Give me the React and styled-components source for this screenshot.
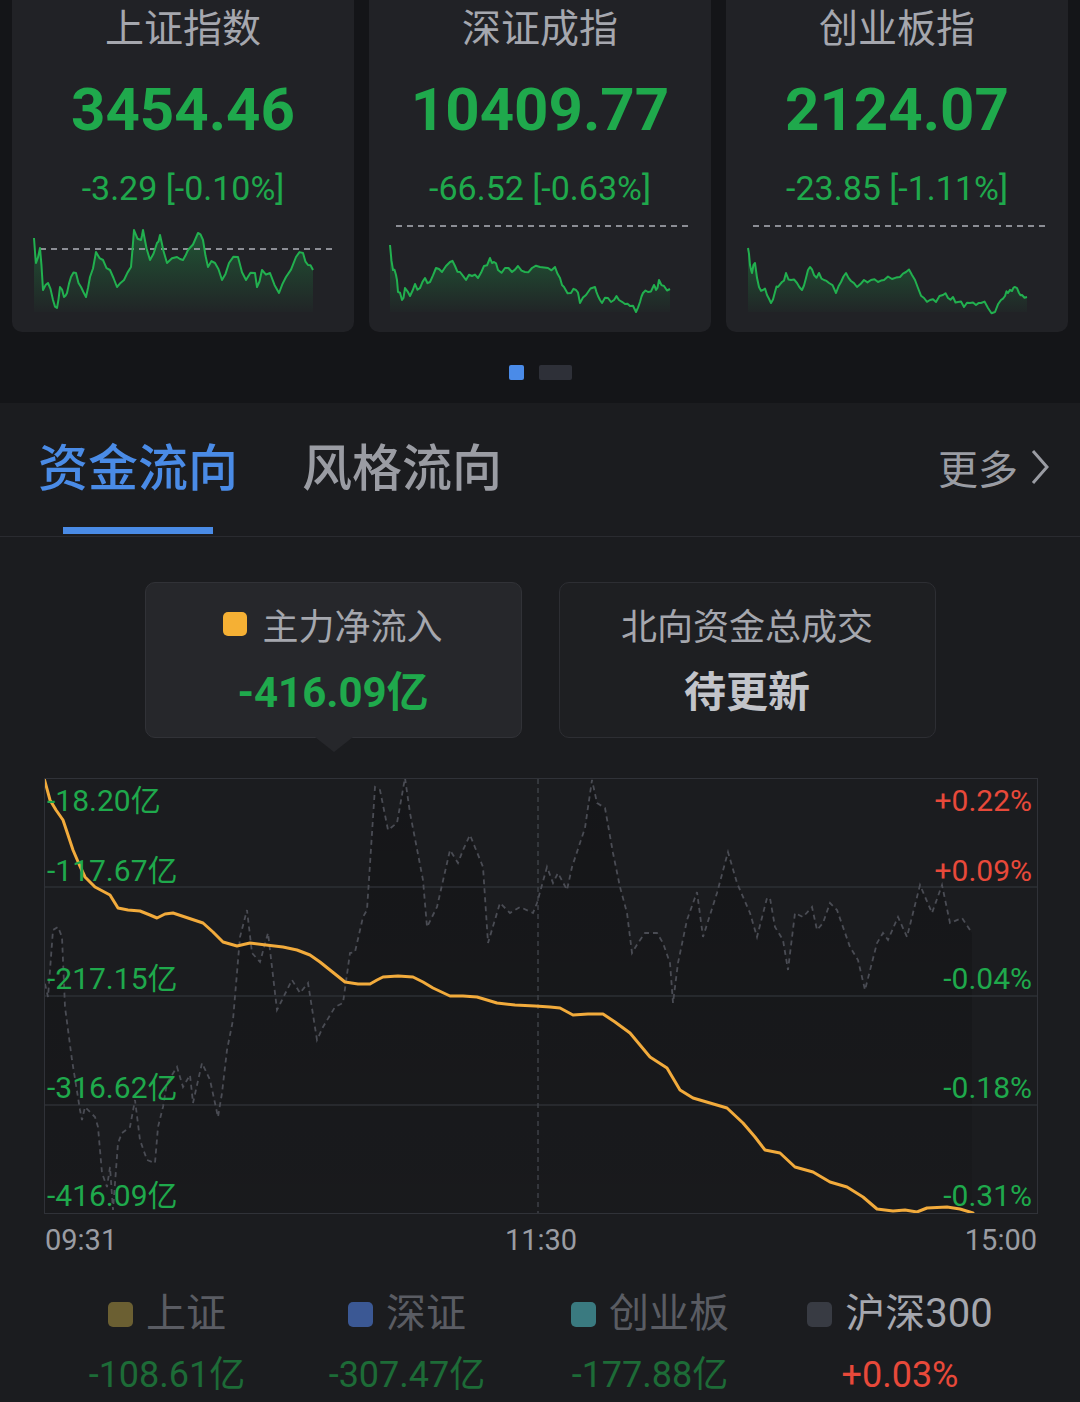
import React from 'react';
import styled, { createGlobalStyle } from 'styled-components';

const GlobalStyle = createGlobalStyle`
  html, body {
    margin: 0;
    padding: 0;
    background: #1b1c1f;
    font-family: Roboto, "Noto Sans CJK SC", sans-serif;
  }
  * { box-sizing: border-box; }
`;

const GREEN = '#1fa94c';
const RED = '#e8493a';

const toPath = pts =>
  pts.map((p, i) => `${i ? 'L' : 'M'}${p[0].toFixed(1)} ${p[1].toFixed(1)}`).join(' ');

// small deterministic wobble between key points so the sparklines look like tick data
const densify = (pts, seed, amp) => {
  let s = seed;
  const rand = () => {
    s = (s * 9301 + 49297) % 233280;
    return s / 233280;
  };
  const out = [];
  pts.forEach((p, i) => {
    out.push(p);
    const n = pts[i + 1];
    if (!n) return;
    out.push([(p[0] + n[0]) / 2, (p[1] + n[1]) / 2 + (rand() - 0.5) * amp * 2]);
  });
  return out;
};

const indices = [
  {
    name: '上证指数',
    value: '3454.46',
    change: '-3.29 [-0.10%]',
    left: 12,
    refY: 249,
    refX: [40, 332],
    data: [[34,238],[36,263],[40,248],[43,290],[48,283],[53,300],[57,308],[60,287],[64,297],[67,293],[71,277],[76,273],[81,287],[86,297],[90,277],[96,252],[103,260],[110,270],[117,287],[124,280],[131,267],[134,230],[141,240],[143,230],[150,260],[157,243],[160,235],[167,263],[177,257],[183,260],[188,250],[198,233],[203,240],[208,267],[215,263],[222,280],[229,263],[238,257],[246,280],[255,273],[257,287],[262,270],[270,273],[279,293],[286,277],[296,257],[303,253],[308,265],[313,270]],
  },
  {
    name: '深证成指',
    value: '10409.77',
    change: '-66.52 [-0.63%]',
    left: 369,
    refY: 226,
    refX: [396, 690],
    data: [[390,245],[393,270],[396,275],[398,292],[402,300],[405,288],[410,296],[415,284],[420,288],[425,278],[430,282],[436,268],[442,272],[450,262],[455,266],[460,272],[466,280],[472,276],[478,278],[484,266],[490,258],[494,262],[498,270],[505,268],[512,272],[518,266],[525,272],[532,268],[540,267],[548,268],[555,267],[560,278],[564,287],[571,293],[576,290],[580,303],[586,295],[595,287],[598,296],[602,303],[608,298],[614,300],[619,300],[625,304],[630,306],[636,312],[640,302],[643,293],[648,292],[654,285],[656,290],[659,280],[664,286],[670,289]],
  },
  {
    name: '创业板指',
    value: '2124.07',
    change: '-23.85 [-1.11%]',
    left: 726,
    refY: 226,
    refX: [753, 1045],
    data: [[748,248],[750,265],[752,273],[755,263],[759,287],[763,290],[767,295],[771,303],[775,292],[778,287],[782,282],[786,273],[791,280],[797,283],[802,290],[806,278],[810,267],[814,275],[819,273],[824,280],[829,283],[836,293],[841,282],[846,273],[851,281],[857,287],[864,280],[871,280],[878,282],[884,280],[892,279],[900,277],[906,272],[912,275],[918,288],[924,298],[930,300],[936,302],[943,295],[948,298],[953,297],[958,302],[964,307],[970,303],[976,305],[981,303],[988,308],[995,312],[1001,300],[1005,296],[1008,293],[1012,291],[1015,287],[1019,293],[1022,295],[1027,297]],
  },
];

const mainFlow = [[44,778],[50,800],[56,810],[63,820],[68,835],[73,850],[79,864],[85,877],[95,887],[110,895],[118,908],[128,910],[140,911],[150,915],[157,918],[165,914],[173,913],[188,918],[203,923],[213,932],[223,942],[237,946],[250,943],[266,945],[283,947],[297,950],[310,955],[320,962],[330,970],[345,982],[358,984],[370,984],[377,980],[383,977],[398,976],[413,977],[423,982],[433,988],[450,996],[463,996],[477,997],[497,1003],[515,1005],[535,1006],[550,1007],[560,1008],[573,1015],[588,1014],[603,1014],[615,1022],[630,1033],[640,1045],[650,1057],[667,1068],[680,1090],[693,1098],[710,1103],[727,1108],[743,1123],[755,1137],[765,1150],[780,1153],[795,1167],[813,1172],[830,1182],[847,1187],[863,1197],[877,1209],[893,1211],[905,1210],[917,1212],[927,1208],[947,1207],[960,1209],[973,1213]];

const hs300 = [[43,975],[48,997],[53,930],[58,927],[62,937],[65,1007],[72,1060],[80,1110],[82,1120],[85,1107],[95,1117],[98,1127],[102,1173],[107,1187],[110,1167],[113,1210],[118,1143],[122,1133],[130,1127],[135,1100],[140,1140],[147,1160],[155,1163],[158,1127],[163,1107],[167,1083],[177,1067],[183,1087],[190,1075],[193,1103],[202,1063],[210,1080],[218,1117],[222,1093],[227,1050],[233,1020],[240,937],[247,910],[252,953],[260,962],[268,933],[277,1010],[292,980],[300,993],[308,983],[317,1040],[323,1027],[335,1007],[343,1003],[350,953],[355,952],[363,917],[367,910],[375,787],[380,790],[388,830],[397,823],[405,778],[410,813],[423,880],[427,927],[437,907],[450,850],[458,863],[463,850],[470,835],[483,867],[488,943],[500,903],[510,913],[520,907],[533,913],[537,903],[547,867],[553,883],[558,873],[567,890],[572,867],[585,828],[592,780],[597,803],[605,808],[613,853],[620,887],[627,913],[632,953],[638,943],[645,933],[657,933],[663,943],[670,963],[673,1003],[678,963],[687,920],[697,892],[703,937],[717,893],[728,852],[737,883],[750,913],[757,937],[767,898],[770,898],[775,927],[783,940],[788,970],[795,913],[803,917],[812,907],[817,930],[823,923],[830,903],[837,910],[850,947],[858,960],[865,990],[877,943],[883,933],[888,940],[898,917],[907,937],[920,885],[932,913],[942,885],[950,923],[962,918],[972,933]];

const leftTicks = [
  { text: '-18.20亿', top: 6 },
  { text: '-117.67亿', top: 76 },
  { text: '-217.15亿', top: 184 },
  { text: '-316.62亿', top: 293 },
  { text: '-416.09亿', top: 401 },
];

const rightTicks = [
  { text: '+0.22%', top: 6, up: true },
  { text: '+0.09%', top: 76, up: true },
  { text: '-0.04%', top: 184 },
  { text: '-0.18%', top: 293 },
  { text: '-0.31%', top: 401 },
];

const legend = [
  { name: '上证', color: '#6b5f32', value: '-108.61亿' },
  { name: '深证', color: '#3b5894', value: '-307.47亿' },
  { name: '创业板', color: '#3a7a80', value: '-177.88亿' },
  { name: '沪深300', color: '#383b43', value: '+0.03%', active: true },
];

const Sparkline = ({ item, id }) => {
  const pts = densify(item.data, item.left, 4).map(([x, y]) => [x - item.left, y - 210]);
  const line = toPath(pts);
  const area = `${line} L${pts[pts.length - 1][0]} 102 L${pts[0][0]} 102 Z`;
  return (
    <SparkSvg viewBox="0 0 342 112" width="342" height="112">
      <defs>
        <linearGradient id={id} x1="0" y1="0" x2="0" y2="1">
          <stop offset="0" stopColor="#1fa94c" stopOpacity="0.38" />
          <stop offset="1" stopColor="#1fa94c" stopOpacity="0.02" />
        </linearGradient>
      </defs>
      <path d={area} fill={`url(#${id})`} />
      <line
        x1={item.refX[0] - item.left}
        x2={item.refX[1] - item.left}
        y1={item.refY - 210}
        y2={item.refY - 210}
        stroke="#8c8e95"
        strokeWidth="2"
        strokeDasharray="6 5"
      />
      <path d={line} fill="none" stroke="#22b04f" strokeWidth="2" strokeLinejoin="round" />
    </SparkSvg>
  );
};

const FlowChart = () => {
  const grey = toPath(hs300);
  const greyArea = `${grey} L972 1213 L43 1213 Z`;
  return (
    <ChartSvg viewBox="0 0 992 434" width="992" height="434">
      <defs>
        <linearGradient id="hsfill" x1="0" y1="0" x2="0" y2="1">
          <stop offset="0" stopColor="#000" stopOpacity="0.22" />
          <stop offset="1" stopColor="#000" stopOpacity="0.08" />
        </linearGradient>
      </defs>
      <g transform="translate(-45 -779)">
        <path d={greyArea} fill="url(#hsfill)" />
        {[887, 996, 1105].map(y => (
          <line key={y} x1="44" x2="1037" y1={y} y2={y} stroke="#2d2f34" strokeWidth="1.5" />
        ))}
        <line x1="538" x2="538" y1="779" y2="1213" stroke="#3e4047" strokeWidth="1.5" strokeDasharray="5 4" />
        <path d={grey} fill="none" stroke="#4a4c54" strokeWidth="1.8" strokeDasharray="5 4" />
        <path d={toPath(mainFlow)} fill="none" stroke="#f2ab3c" strokeWidth="3" strokeLinejoin="round" strokeLinecap="round" />
      </g>
    </ChartSvg>
  );
};

const App = () => {
  return (
    <Page>
      <GlobalStyle />
      <TopArea>
        <CardRow>
          {indices.map((item, i) => (
            <IndexCard key={item.name}>
              <CardTitle>{item.name}</CardTitle>
              <CardValue>{item.value}</CardValue>
              <CardChange>{item.change}</CardChange>
              <Sparkline item={item} id={`spark${i}`} />
            </IndexCard>
          ))}
        </CardRow>
        <Dots>
          <Dot $active />
          <Dot />
        </Dots>
      </TopArea>

      <Section>
        <TabBar>
          <Tab $active>
            <span>资金流向</span>
            <TabLine />
          </Tab>
          <Tab>
            <span>风格流向</span>
          </Tab>
          <More>
            更多
            <svg width="20" height="36" viewBox="0 0 20 36">
              <polyline points="3,2 17,18 3,34" fill="none" stroke="#9a9ca3" strokeWidth="3" />
            </svg>
          </More>
        </TabBar>

        <SummaryRow>
          <SummaryBox $active>
            <SummaryLabel>
              <Swatch $color="#f5b034" $size={24} />
              主力净流入
            </SummaryLabel>
            <SummaryValue $color={GREEN}>-416.09亿</SummaryValue>
          </SummaryBox>
          <SummaryBox>
            <SummaryLabel>北向资金总成交</SummaryLabel>
            <SummaryValue $color="#c2c4ca">待更新</SummaryValue>
          </SummaryBox>
        </SummaryRow>

        <ChartBox>
          <FlowChart />
          {leftTicks.map(t => (
            <TickLeft key={t.text} style={{ top: t.top }}>{t.text}</TickLeft>
          ))}
          {rightTicks.map(t => (
            <TickRight key={t.text} $up={t.up} style={{ top: t.top }}>{t.text}</TickRight>
          ))}
        </ChartBox>

        <TimeAxis>
          <span>09:31</span>
          <span>11:30</span>
          <span>15:00</span>
        </TimeAxis>

        <Legend>
          {legend.map(l => (
            <LegendItem key={l.name}>
              <LegendName $active={l.active}>
                <Swatch $color={l.color} $size={25} />
                {l.name}
              </LegendName>
              <LegendValue $up={l.active}>{l.value}</LegendValue>
            </LegendItem>
          ))}
        </Legend>
      </Section>
    </Page>
  );
};

export default App;

const Page = styled.div`
  width: 1080px;
  min-height: 1402px;
  background: #1b1c1f;
  overflow: hidden;
`;

const TopArea = styled.div`
  background: #141518;
`;

const CardRow = styled.div`
  display: grid;
  grid-template-columns: repeat(3, 342px);
  gap: 15px;
  padding: 0 12px;
`;

const IndexCard = styled.div`
  height: 332px;
  background: #212226;
  border-radius: 0 0 10px 10px;
  display: flex;
  flex-direction: column;
  align-items: center;
`;

const CardTitle = styled.div`
  font-size: 39px;
  line-height: 50px;
  color: #a5a7ae;
  font-family: "Noto Sans CJK SC", sans-serif;
`;

const CardValue = styled.div`
  margin-top: 30px;
  font-size: 60px;
  line-height: 60px;
  font-weight: 700;
  color: ${GREEN};
`;

const CardChange = styled.div`
  margin-top: 28px;
  font-size: 34px;
  line-height: 40px;
  color: ${GREEN};
`;

const SparkSvg = styled.svg`
  display: block;
  margin-top: 2px;
  align-self: flex-start;
`;

const Dots = styled.div`
  height: 71px;
  padding-top: 33px;
  display: flex;
  justify-content: center;
  gap: 15px;
`;

const Dot = styled.div`
  width: ${p => (p.$active ? '15px' : '33px')};
  height: 15px;
  border-radius: 2px;
  background: ${p => (p.$active ? '#4a8be8' : '#2e3038')};
`;

const Section = styled.div`
  background: #1b1c1f;
  padding-bottom: 20px;
`;

const TabBar = styled.div`
  height: 134px;
  border-bottom: 1px solid #2a2b30;
  display: flex;
  align-items: flex-start;
  padding: 0 30px 0 38px;
  gap: 64px;
`;

const Tab = styled.div`
  display: flex;
  flex-direction: column;
  align-items: center;
  padding-top: 31px;
  span {
    font-family: "Noto Sans CJK SC", sans-serif;
    font-size: 50px;
    line-height: 60px;
    font-weight: 500;
    color: ${p => (p.$active ? '#4a8be6' : '#9a9ca3')};
  }
`;

const TabLine = styled.div`
  width: 150px;
  height: 7px;
  margin-top: 33px;
  background: #4a8be6;
`;

const More = styled.div`
  margin-left: auto;
  margin-top: 40px;
  display: flex;
  align-items: center;
  gap: 12px;
  font-family: "Noto Sans CJK SC", sans-serif;
  font-size: 40px;
  line-height: 48px;
  color: #9a9ca3;
`;

const SummaryRow = styled.div`
  display: flex;
  justify-content: center;
  gap: 37px;
  margin-top: 45px;
`;

const SummaryBox = styled.div`
  position: relative;
  width: 377px;
  height: 156px;
  border-radius: 10px;
  border: 1px solid ${p => (p.$active ? '#313237' : '#2d2e33')};
  background: ${p => (p.$active ? '#26272b' : '#1e1f22')};
  display: flex;
  flex-direction: column;
  align-items: center;
  padding-top: 19px;
  &::after {
    content: '';
    display: ${p => (p.$active ? 'block' : 'none')};
    position: absolute;
    left: 169px;
    bottom: -15px;
    border-left: 19px solid transparent;
    border-right: 19px solid transparent;
    border-top: 15px solid #26272b;
  }
`;

const Swatch = styled.span`
  display: inline-block;
  width: ${p => p.$size}px;
  height: ${p => p.$size}px;
  border-radius: 5px;
  background: ${p => p.$color};
  flex-shrink: 0;
`;

const SummaryLabel = styled.div`
  display: flex;
  align-items: center;
  gap: 15px;
  font-family: "Noto Sans CJK SC", sans-serif;
  font-size: 36px;
  line-height: 44px;
  color: #a5a7ae;
`;

const SummaryValue = styled.div`
  margin-top: 22px;
  font-size: 42px;
  line-height: 50px;
  font-weight: 700;
  color: ${p => p.$color};
`;

const ChartBox = styled.div`
  position: relative;
  margin: 40px 0 0 44px;
  width: 994px;
  height: 436px;
  border: 1px solid #303238;
`;

const ChartSvg = styled.svg`
  display: block;
`;

const TickLeft = styled.div`
  position: absolute;
  left: 2px;
  font-size: 30px;
  line-height: 32px;
  color: ${GREEN};
`;

const TickRight = styled.div`
  position: absolute;
  right: 5px;
  font-size: 30px;
  line-height: 32px;
  color: ${p => (p.$up ? RED : GREEN)};
`;

const TimeAxis = styled.div`
  width: 994px;
  margin: 9px 0 0 44px;
  padding: 0 1px 0 1px;
  display: flex;
  justify-content: space-between;
  font-size: 29px;
  line-height: 34px;
  color: #9a9ca3;
`;

const Legend = styled.div`
  display: grid;
  grid-template-columns: 240px 240px 246px 254px;
  padding-left: 47px;
  margin-top: 33px;
`;

const LegendItem = styled.div`
  display: flex;
  flex-direction: column;
  align-items: center;
`;

const LegendName = styled.div`
  display: flex;
  align-items: center;
  gap: 13px;
  font-family: Roboto, "Noto Sans CJK SC", sans-serif;
  font-size: 40px;
  line-height: 48px;
  color: ${p => (p.$active ? '#a5a7ae' : '#5a5c63')};
`;

const LegendValue = styled.div`
  margin-top: 15px;
  font-size: 36px;
  line-height: 44px;
  color: ${p => (p.$up ? RED : '#1d6b37')};
`;
